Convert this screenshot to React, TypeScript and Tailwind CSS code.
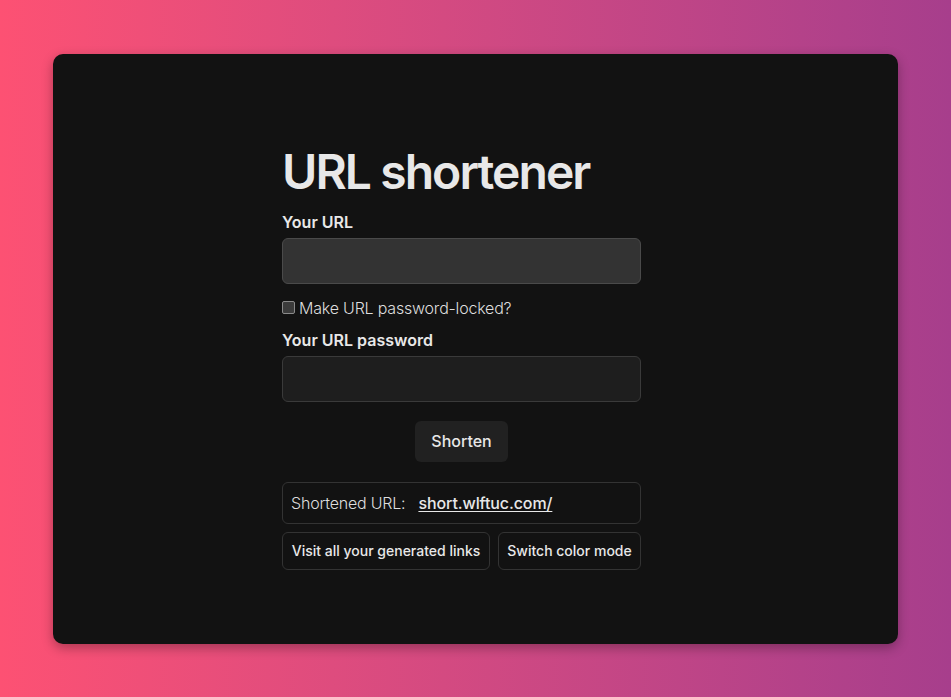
import React from "react";

const App = () => {
  return (
    <div
      className="w-full h-[697px] flex items-center justify-center bg-gradient-to-r from-[#fd5173] to-[#a73e8c]"
      style={{ fontFamily: "Inter, 'Noto Sans', sans-serif" }}
    >
      <div className="w-[845px] h-[590px] bg-[#121212] rounded-[10px] shadow-[0_4px_12px_rgba(0,0,0,0.3)] flex justify-center pt-[94px] pr-[28px]">
        <div className="w-[359px] flex flex-col text-[#e8e8e8]">
          <h1 className="text-[48px] leading-[48px] font-semibold tracking-[-0.04em]">URL shortener</h1>

          <label className="mt-[14px] text-base leading-6 font-semibold">Your URL</label>
          <div className="mt-[4px] h-[46px] rounded-[6px] bg-[#333333] border border-[#4a4a4a]" />

          <div className="mt-[12px] flex items-center gap-[4px] h-6">
            <span className="w-[13px] h-[13px] rounded-[2px] border border-[#8a8a8a] bg-[#3b3b3b]" />
            <span className="text-base font-light tracking-[-0.2px] text-[#dedede]">Make URL password-locked?</span>
          </div>

          <label className="mt-[8px] text-base leading-6 font-semibold">Your URL password</label>
          <div className="mt-[4px] h-[46px] rounded-[6px] bg-[#1e1e1e] border border-[#3a3a3a]" />

          <div className="mt-[19px] flex justify-center">
            <button className="h-[41px] w-[93px] rounded-[6px] bg-[#212121] text-base font-medium text-[#e8e8e8]">
              Shorten
            </button>
          </div>

          <div className="mt-[20px] h-[42px] rounded-[6px] border border-[#333333] flex items-center px-[8px] text-base">
            <span className="font-light tracking-[-0.2px] text-[#dedede]">Shortened URL:</span>
            <a className="ml-[13px] font-medium underline underline-offset-2 tracking-[-0.1px]">short.wlftuc.com/</a>
          </div>

          <div className="mt-[8px] flex gap-[8px]">
            <button className="h-[38px] w-[208px] px-[8px] rounded-[6px] border border-[#333333] text-sm font-medium text-[#e8e8e8]">
              Visit all your generated links
            </button>
            <button className="h-[38px] flex-1 px-[8px] rounded-[6px] border border-[#333333] text-sm font-medium text-[#e8e8e8]">
              Switch color mode
            </button>
          </div>
        </div>
      </div>
    </div>
  );
};

export default App;
